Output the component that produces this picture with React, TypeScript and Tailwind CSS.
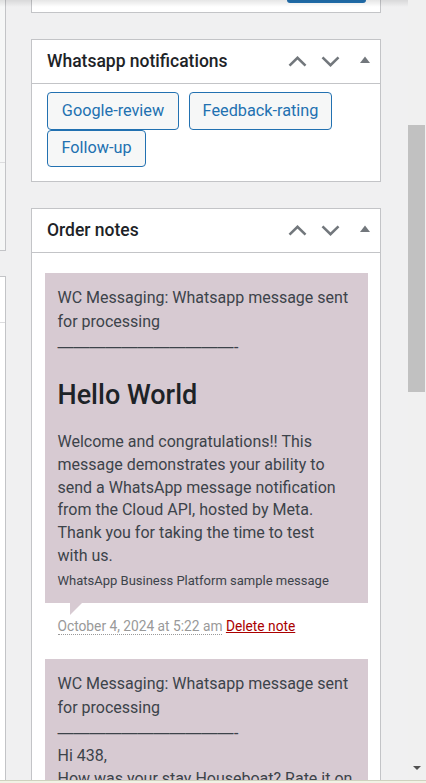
import React from 'react';

function ChevronUp() {
  return (
    <svg width="19" height="11" viewBox="0 0 19 11" fill="none">
      <path d="M1.5 9.6L9.5 1.8L17.5 9.6" stroke="#72777c" strokeWidth="2.6" />
    </svg>
  );
}

function ChevronDown() {
  return (
    <svg width="19" height="11" viewBox="0 0 19 11" fill="none">
      <path d="M1.5 1.4L9.5 9.2L17.5 1.4" stroke="#72777c" strokeWidth="2.6" />
    </svg>
  );
}

function Toggle() {
  return (
    <svg width="10" height="7" viewBox="0 0 10 7">
      <path d="M0 7L5 0.6L10 7Z" fill="#72777c" />
    </svg>
  );
}

function PostboxHeader({ title }: { title: string }) {
  return (
    <div className="flex h-[44px] shrink-0 items-center border-b border-[#c3c4c7] pl-[15px] pr-[10px]">
      <h2 className="text-[17.5px] font-medium text-[#1d2327]">{title}</h2>
      <div className="ml-auto flex items-center">
        <ChevronUp />
        <span className="ml-[14px] flex">
          <ChevronDown />
        </span>
        <span className="mb-[5px] ml-[20px] flex">
          <Toggle />
        </span>
      </div>
    </div>
  );
}

function ActionButton({ label, width }: { label: string; width: string }) {
  return (
    <button
      className={`flex h-[37.5px] items-center justify-center rounded-[4px] border border-[#2271b1] bg-[#f6f7f7] text-[16.25px] text-[#2271b1] ${width}`}
    >
      {label}
    </button>
  );
}

function Dashes() {
  return <span className="font-['Liberation_Sans',Arial,sans-serif]">———————————-</span>;
}

function Note({ children, date }: { children: React.ReactNode; date: string }) {
  return (
    <li>
      <div className="bg-[#d7cad2] p-[12.5px] text-[16px] text-[#3c434a]">{children}</div>
      <div className="ml-[25px] h-0 w-0 border-t-[12px] border-r-[12px] border-t-[#d7cad2] border-r-transparent" />
      <p className="px-[12.5px] pb-[21px] text-[13.75px] leading-[23px] text-[#999]">
        <span className="border-b border-dotted border-[#999]">{date}</span>{' '}
        <a href="#" className="text-[#a00] underline">
          Delete note
        </a>
      </p>
    </li>
  );
}

export default function App() {
  return (
    <div className="flex h-[783px] w-[426px] flex-col overflow-hidden bg-[#f0f0f1] font-['Roboto',Arial,sans-serif]">
      <div className="flex min-h-0 flex-1">
        <div className="relative flex min-w-0 flex-1">
          <div className="pointer-events-none absolute inset-x-0 top-0 h-[7px] bg-linear-to-b from-black/10 to-transparent" />

          {/* left column, cut off */}
          <div className="flex w-[6px] shrink-0 flex-col">
            <div className="h-[251px] border-r border-b border-[#c3c4c7] bg-[#f6f7f7]">
              <div className="h-[163px] border-b border-[#dcdcde]" />
            </div>
            <div className="mt-[25px] flex-1 border-t border-r border-[#c3c4c7] bg-white">
              <div className="h-[46px] border-b border-[#dcdcde]" />
            </div>
          </div>

          {/* sidebar */}
          <div className="ml-[25px] flex w-[350px] shrink-0 flex-col">
            <div className="flex h-[13px] shrink-0 justify-end border-x border-b border-[#c3c4c7] bg-white pr-[14px]">
              <div className="h-[3px] w-[79px] rounded-b-[3px] bg-[#2271b1]" />
            </div>

            <div className="mt-[26px] shrink-0 border border-[#c3c4c7] bg-white">
              <PostboxHeader title="Whatsapp notifications" />
              <div className="flex flex-wrap gap-x-[10px] px-[15px] pt-[8px] pb-[14px]">
                <ActionButton label="Google-review" width="w-[132px]" />
                <ActionButton label="Feedback-rating" width="w-[143px]" />
                <ActionButton label="Follow-up" width="w-[99px]" />
              </div>
            </div>

            <div className="mt-[26px] flex min-h-0 flex-1 flex-col overflow-hidden border-x border-t border-[#c3c4c7] bg-white">
              <PostboxHeader title="Order notes" />
              <ul className="shrink-0 pt-[20px] pr-[12px] pl-[13px]">
                <Note date="October 4, 2024 at 5:22 am">
                  <div className="leading-[24.5px]">
                    WC Messaging: Whatsapp message sent
                    <br />
                    for processing
                    <br />
                    <Dashes />
                  </div>
                  <h2 className="my-[21px] text-[27px] font-medium leading-[30px] text-[#1d2327]">Hello World</h2>
                  <p className="leading-[22.75px]">
                    Welcome and congratulations!! This
                    <br />
                    message demonstrates your ability to
                    <br />
                    send a WhatsApp message notification
                    <br />
                    from the Cloud API, hosted by Meta.
                    <br />
                    Thank you for taking the time to test
                    <br />
                    with us.
                  </p>
                  <p className="mt-[2px] text-[13px] leading-[21px]">WhatsApp Business Platform sample message</p>
                </Note>
                <Note date="October 4, 2024 at 5:22 am">
                  <div className="leading-[24.5px]">
                    WC Messaging: Whatsapp message sent
                    <br />
                    for processing
                    <br />
                    <Dashes />
                  </div>
                  <p className="leading-[22.75px]">
                    Hi 438,
                    <br />
                    How was your stay Houseboat? Rate it on
                  </p>
                </Note>
              </ul>
            </div>
          </div>
        </div>

        {/* scrollbar */}
        <div className="flex w-[18px] shrink-0 flex-col bg-[#f0f0f0]">
          <div className="mt-[125px] h-[267px] w-[17px] bg-[#c1c1c1]" />
          <svg className="mt-auto mb-[10px] ml-[5px]" width="8" height="4" viewBox="0 0 8 4">
            <path d="M0 0H8L4 4Z" fill="#505050" />
          </svg>
        </div>
      </div>
      <div className="h-[3px] shrink-0 border-t border-[#cfd1bf] bg-[#f1f2e5]" />
    </div>
  );
}
